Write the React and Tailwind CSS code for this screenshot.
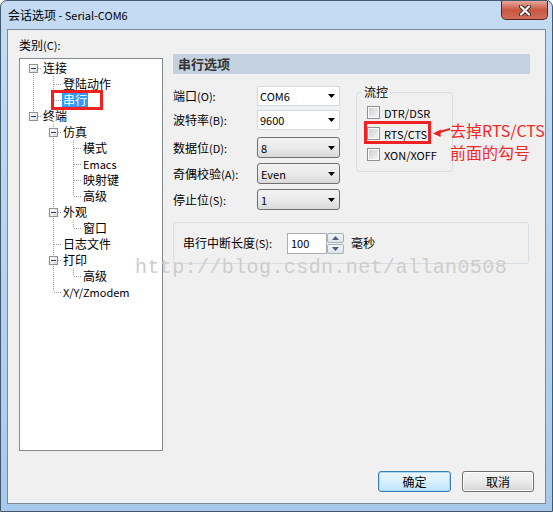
import React from 'react';

// latin runs a touch smaller so they sit closer to the Tahoma widths
function Tx({ children }) {
  const parts = String(children).split(/([\x20-\x7e]+)/).filter(Boolean);
  return parts.map((p, i) =>
    /^[\x20-\x7e]+$/.test(p) ? (
      <span key={i} className="text-[11px]">{p}</span>
    ) : (
      <React.Fragment key={i}>{p}</React.Fragment>
    )
  );
}

// tree rows: indent class, expander, selected
const rows = [
  { t: '连接', pad: 'pl-[9px]', exp: true },
  { t: '登陆动作', pad: 'pl-[42px]' },
  { t: '串行', pad: 'pl-[42px]', sel: true },
  { t: '终端', pad: 'pl-[9px]', exp: true },
  { t: '仿真', pad: 'pl-[29px]', exp: true },
  { t: '模式', pad: 'pl-[62px]' },
  { t: 'Emacs', pad: 'pl-[62px]' },
  { t: '映射键', pad: 'pl-[62px]' },
  { t: '高级', pad: 'pl-[62px]' },
  { t: '外观', pad: 'pl-[29px]', exp: true },
  { t: '窗口', pad: 'pl-[62px]' },
  { t: '日志文件', pad: 'pl-[42px]' },
  { t: '打印', pad: 'pl-[29px]', exp: true },
  { t: '高级', pad: 'pl-[62px]' },
  { t: 'X/Y/Zmodem', pad: 'pl-[42px]' },
];

const levelOf = [0, 1, 1, 0, 1, 2, 2, 2, 2, 1, 2, 1, 1, 2, 1];

function TreeLines() {
  const cy = (i) => 9 + 16 * i + 0.5;
  const vert = [
    [13, 9, 57],
    [33, 17, 41],
    [33, 65, 233],
    [53, 81, 137],
    [53, 161, 169],
    [53, 209, 217],
  ];
  return (
    <svg className="absolute left-0 top-0" width="142" height="391" shapeRendering="crispEdges">
      <g stroke="#a0a0a0" strokeWidth="1" strokeDasharray="1 1">
        {vert.map(([x, a, b], k) => (
          <line key={'v' + k} x1={x + 0.5} y1={a} x2={x + 0.5} y2={b} />
        ))}
        {levelOf.map((l, i) => {
          const x = 13 + l * 20;
          return <line key={'h' + i} x1={x + 1} y1={cy(i)} x2={x + 9} y2={cy(i)} />;
        })}
      </g>
    </svg>
  );
}

const Expander = () => (
  <div className="relative w-[9px] h-[9px] border border-[#919191] bg-gradient-to-br from-white to-[#dcdcdc] flex items-center justify-center">
    <div className="w-[5px] h-[1px] bg-[#1e3d7a]" />
  </div>
);

const Arrow = () => (
  <svg width="7" height="4" viewBox="0 0 7 4">
    <path d="M0 0h7L3.5 4z" fill="#000" />
  </svg>
);

function Combo({ value, flat, className = '' }) {
  const look = flat
    ? 'h-[20px] bg-white border border-[#d3d9e0] pl-[2px]'
    : 'h-[21px] rounded-[3px] border border-[#707070] bg-gradient-to-b from-[#f3f3f3] via-[#ebebeb] to-[#d9d9d9] pl-[3px]';
  return (
    <div className={`w-[83px] flex items-center justify-between pr-[4px] ${look} ${className}`}>
      <span className="text-[11px]">{value}</span>
      <Arrow />
    </div>
  );
}

const Check = ({ label }) => (
  <div className="h-[21px] flex items-center gap-[4px]">
    <div className="w-[13px] h-[13px] border border-[#8e8f8f] bg-white p-[1px]">
      <div className="w-full h-full bg-gradient-to-br from-[#cdd0d4] to-[#f4f4f4]" />
    </div>
    <span className="text-[11px]">{label}</span>
  </div>
);

function FormRow({ label, children, className = '' }) {
  return (
    <div className={`flex items-center ${className}`}>
      <span className="w-[84px]"><Tx>{label}</Tx></span>
      {children}
    </div>
  );
}

export default function App() {
  return (
    <div className="relative w-[553px] h-[512px] overflow-hidden font-[family-name:'Noto_Sans_CJK_SC','Liberation_Sans',sans-serif] text-[12px] leading-[16px] text-black">
      <div className="w-full h-full flex flex-col border border-[#41586f] rounded-t-[7px] bg-gradient-to-b from-[#c4dbf3] via-[#b8d3f0] to-[#a9c9ea]">
        {/* title bar */}
        <div className="h-[28px] flex items-start justify-between pl-[7px] pr-[4px]">
          <div className="mt-[6px]"><Tx>会话选项 - Serial-COM6</Tx></div>
          <div className="w-[47px] h-[19px] rounded-b-[5px] border border-t-0 border-[#5a2620] bg-gradient-to-b from-[#e6a89d] via-[#c85640] to-[#cf6e58] flex items-center justify-center">
            <svg width="12" height="11" viewBox="0 0 12 11">
              <path d="M2 1.5l8 8M10 1.5l-8 8" stroke="#3b2420" strokeWidth="4" strokeLinecap="round" />
              <path d="M2 1.5l8 8M10 1.5l-8 8" stroke="#fff" strokeWidth="2.2" strokeLinecap="round" />
            </svg>
          </div>
        </div>

        {/* client area */}
        <div className="mx-[6px] h-[475px] border border-[#7b8896] bg-[#f0f0f0] flex px-[11px] pb-[11px]">
          {/* category tree */}
          <div className="flex flex-col pt-[7px]">
            <div className="h-[16px]"><Tx>类别(C):</Tx></div>
            <div className="relative mt-[5px] w-[144px] h-[393px] border border-[#828790] bg-white pt-[1px]">
              <TreeLines />
              {rows.map((r, i) => (
                <div key={i} className={`relative h-[16px] flex items-center ${r.pad}`}>
                  {r.exp && <Expander />}
                  <span
                    className={`px-[1px] ${r.exp ? 'ml-[4px]' : ''} ${
                      r.sel ? 'bg-[#3399ff] text-white h-[16px]' : 'bg-white'
                    }`}
                  >
                    <Tx>{r.t}</Tx>
                  </span>
                </div>
              ))}
            </div>
          </div>

          {/* serial options */}
          <div className="ml-[10px] w-[361px] flex flex-col pt-[24px]">
            <div className="w-[357px] h-[20px] bg-[#c4d2df] pl-[5px] flex items-center text-[13px] font-bold text-[#333]">
              串行选项
            </div>

            <div className="flex items-start">
              <div className="flex flex-col">
                <FormRow label="端口(O):" className="mt-[12px]">
                  <Combo value="COM6" flat />
                </FormRow>
                <FormRow label="波特率(B):" className="mt-[4px]">
                  <Combo value="9600" flat />
                </FormRow>
                <FormRow label="数据位(D):" className="mt-[7px]">
                  <Combo value="8" />
                </FormRow>
                <FormRow label="奇偶校验(A):" className="mt-[5px]">
                  <Combo value="Even" />
                </FormRow>
                <FormRow label="停止位(S):" className="mt-[5px]">
                  <Combo value="1" />
                </FormRow>
              </div>

              <fieldset className="ml-[16px] mt-[10px] w-[97px] h-[88px] border border-[#d5dfe5] rounded-[3px] pl-[5px]">
                <legend className="px-[2px] leading-[16px]">流控</legend>
                <div className="ml-[5px] mt-[2px]">
                  <Check label="DTR/DSR" />
                  <Check label="RTS/CTS" />
                  <Check label="XON/XOFF" />
                </div>
              </fieldset>
            </div>

            <div className="mt-[12px] w-[356px] h-[42px] border border-[#d5dfe5] rounded-[3px] flex items-center pl-[9px]">
              <span className="w-[104px]"><Tx>串行中断长度(S):</Tx></span>
              <div className="w-[40px] h-[21px] border border-[#abadb3] bg-white pl-[3px] flex items-center text-[11px]">100</div>
              <div className="w-[17px] h-[21px] flex flex-col">
                <div className="h-[10px] border border-[#a7b0bc] rounded-[2px] bg-gradient-to-b from-[#f5f5f5] to-[#dfe3e8] flex items-center justify-center">
                  <svg width="7" height="4" viewBox="0 0 7 4"><path d="M0 4h7L3.5 0z" fill="#4d5f85" /></svg>
                </div>
                <div className="mt-[1px] h-[10px] border border-[#a7b0bc] rounded-[2px] bg-gradient-to-b from-[#f5f5f5] to-[#dfe3e8] flex items-center justify-center">
                  <svg width="7" height="4" viewBox="0 0 7 4"><path d="M0 0h7L3.5 4z" fill="#4d5f85" /></svg>
                </div>
              </div>
              <span className="ml-[7px]">毫秒</span>
            </div>

            <div className="flex-1" />

            <div className="flex justify-end gap-[11px]">
              <button className="w-[73px] h-[21px] rounded-[3px] border border-[#3c7fb1] bg-gradient-to-b from-[#eaf6fd] via-[#d9f0fc] to-[#bee6fd] shadow-[inset_0_0_0_1px_#a8daf5] leading-[16px]">
                确定
              </button>
              <button className="w-[72px] h-[21px] rounded-[3px] border border-[#707070] bg-gradient-to-b from-[#f2f2f2] via-[#ebebeb] to-[#d6d6d6] shadow-[inset_0_0_0_1px_#fcfcfc] leading-[16px]">
                取消
              </button>
            </div>
          </div>
        </div>
      </div>

      {/* watermark */}
      <div className="absolute left-[135px] top-[256px] font-[family-name:'Liberation_Mono',monospace] text-[20px] leading-[24px] tracking-[0.4px] text-[#cdcdcd] pointer-events-none">
        http://blog.csdn.net/allan0508
      </div>

      {/* red annotations */}
      <div className="absolute left-[51px] top-[90px] w-[52px] h-[20px] border-[3px] border-[#ee2222]" />
      <div className="absolute left-[364px] top-[121px] w-[67px] h-[23px] border-[3px] border-[#ee2222]" />
      <svg className="absolute left-[430px] top-[124px]" width="22" height="18" viewBox="0 0 22 18">
        <path d="M20 5L6 9" stroke="#ee2222" strokeWidth="2" />
        <path d="M3 9.5L11 5.5L10.5 13z" fill="#ee2222" />
      </svg>
      <div className="absolute left-[450px] top-[119px] text-[16px] leading-[22px] text-[#f02828]">
        <div>去掉RTS/CTS</div>
        <div>前面的勾号</div>
      </div>
    </div>
  );
}
